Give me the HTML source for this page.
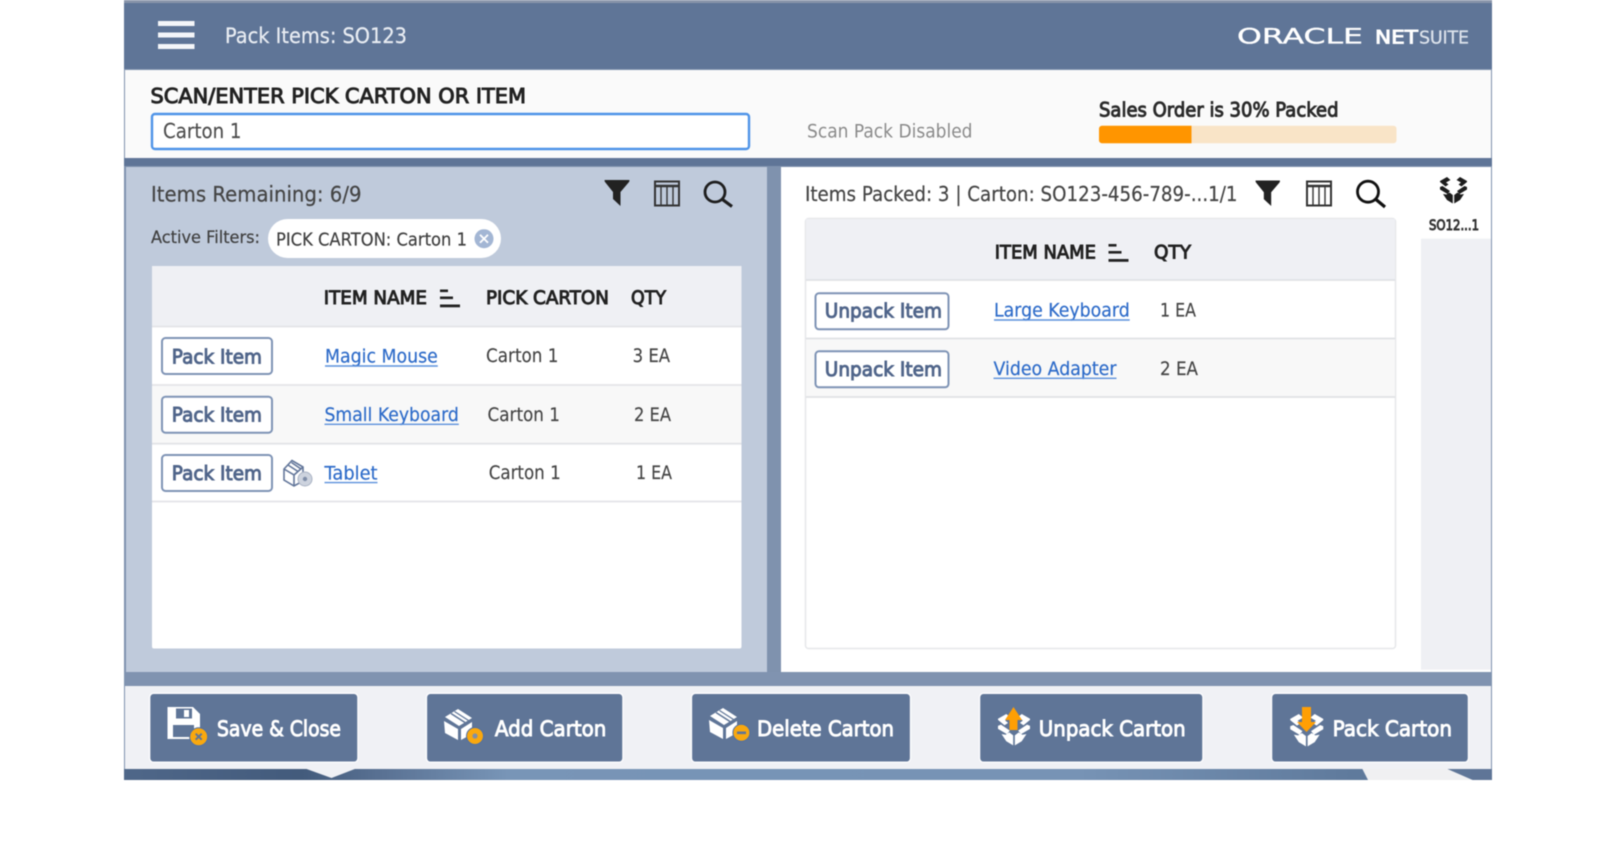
<!DOCTYPE html>
<html><head><meta charset="utf-8"><title>Pack Items: SO123</title>
<style>
html,body{margin:0;padding:0;background:#fff;width:1620px;height:849px;overflow:hidden}
svg{display:block}
text{font-family:"DejaVu Sans","Liberation Sans",sans-serif;white-space:pre}
.b{stroke-width:.95px}
.d{fill:#444;stroke:#444;stroke-width:.15px;font-size:19px}
.l{fill:#2d6bc9;stroke:#2d6bc9;stroke-width:.2px;font-size:19px}
.h{fill:#222;stroke:#222;font-size:18.500px}
.p{fill:#50658a;stroke:#50658a;font-size:19.500px}
.w{fill:#fff;stroke:#fff;font-size:21.500px}
</style></head><body>
<svg width="1620" height="849" viewBox="0 0 1620 849" xmlns="http://www.w3.org/2000/svg">
<defs>
<linearGradient id="bot" x1="0" x2="1" y1="0" y2="0">
<stop offset="0" stop-color="#4f6789"/><stop offset=".13" stop-color="#435b7c"/><stop offset=".19" stop-color="#5a7294"/><stop offset=".28" stop-color="#7895b7"/><stop offset=".7" stop-color="#7793b5"/><stop offset=".9" stop-color="#5f7a9c"/><stop offset="1" stop-color="#5f7597"/>
</linearGradient>
<symbol id="funnel" viewBox="0 0 26 27" overflow="visible"><path d="M1 1H25Q26 1 25 3L16.500 13V27L9 20V13L1 3Q0 1 1 1Z" fill="#222"/></symbol>
<symbol id="cols" viewBox="0 0 26 26" overflow="visible"><g fill="none" stroke="#333"><rect x="1" y="1" width="24" height="24" stroke-width="2"/><path d="M1 5.500H25" stroke-width="2.500"/><path d="M7 6V24M13 6V24M19 6V24" stroke-width="1.400"/></g></symbol>
<symbol id="sort" viewBox="0 0 20 18" overflow="visible"><g fill="#222"><rect x="0" y="0" width="8" height="2.600"/><rect x="0" y="7" width="13" height="2.600"/><rect x="0" y="15" width="20" height="2.800"/></g></symbol>
<symbol id="bx" viewBox="0 0 27 27" overflow="visible">
<path d="M7 0 10.500 3 6 5.500 8.500 7.500 5.500 9.500 0 5V4ZM20 0 16.500 3 21 5.500 18.500 7.500 21.500 9.500 27 5V4ZM0 10 2.500 9 10 14 7.500 17 0 12.500ZM27 10 24.500 9 17 14 19.500 17 27 12.500ZM3 17 6.500 17.500 9.500 15.500 12.800 18V26.500L7 23ZM24 17 20.500 17.500 17.500 15.500 14.200 18V26.500L20 23Z"/>
</symbol>
<symbol id="carton" viewBox="0 0 30 32" overflow="visible">
<path d="M0 13 14 21V32L1 25Z M17 21 28 14V26L17 32Z" fill="#fff"/>
<path d="M1 9 14 1 28 10 15 18Z" fill="#fff"/>
<path d="M7 5.500 21 14.500" stroke="#5f7597" stroke-width="1.600"/>
<path d="M10.500 3.500 24.500 12.500" stroke="#5f7597" stroke-width="1.200"/>
</symbol>
</defs>

<g style="filter:blur(.55px)">
<rect width="1620" height="849" fill="#fff"/>
<!-- app bg -->
<rect x="124" y="0" width="1368" height="780" fill="#7f92ae"/>
<rect x="124" y="0" width="1368" height="3" fill="#8995aa"/>
<rect x="124" y="3" width="1368" height="66" fill="#5f7597"/>
<rect x="158" y="21" width="36.500" height="5" fill="#f4f6f9"/>
<rect x="158" y="32.500" width="36.500" height="5" fill="#f4f6f9"/>
<rect x="158" y="44" width="36.500" height="5" fill="#f4f6f9"/>
<text x="225" y="43" font-size="21" fill="#e9edf3" stroke="#e9edf3" stroke-width=".25" textLength="182" lengthAdjust="spacingAndGlyphs">Pack Items: SO123</text>
<text x="1237" y="43.300" font-size="21" fill="#fff" stroke="#fff" stroke-width=".35" textLength="126" lengthAdjust="spacingAndGlyphs">ORACLE</text>
<text x="1375" y="43.300" font-size="19" fill="#fff" stroke="#fff" stroke-width=".9" textLength="43" lengthAdjust="spacingAndGlyphs">NET</text>
<text x="1419" y="43.300" font-size="17.500" fill="#dde3ec" stroke="#dde3ec" stroke-width=".25" textLength="50" lengthAdjust="spacing">SUITE</text>

<!-- scan bar -->
<rect x="125" y="70" width="1366" height="88" fill="#fafafa"/>
<rect x="124" y="158" width="1368" height="8" fill="#5f7597"/>
<text x="150.500" y="103" class="b" font-size="20.500" fill="#222" stroke="#222" textLength="375.500" lengthAdjust="spacingAndGlyphs">SCAN/ENTER PICK CARTON OR ITEM</text>
<rect x="152" y="114" width="597" height="35" rx="3" fill="#fff" stroke="#4f94e8" stroke-width="2.400"/>
<text x="163" y="138" font-size="20.500" fill="#4d4d4d" stroke="#4d4d4d" stroke-width=".15" textLength="78.500" lengthAdjust="spacingAndGlyphs">Carton 1</text>
<text x="807" y="137.300" font-size="18.500" fill="#8a8a8a" textLength="165.500" lengthAdjust="spacingAndGlyphs">Scan Pack Disabled</text>
<text x="1099" y="116.700" class="b" font-size="19.500" fill="#2b2b2b" stroke="#2b2b2b" textLength="239.500" lengthAdjust="spacingAndGlyphs">Sales Order is 30% Packed</text>
<rect x="1099" y="125.700" width="297.500" height="17.600" rx="3" fill="#f9e4c7"/>
<path d="M1102 125.700H1191.500V143.300H1102a3 3 0 0 1-3-3V128.700a3 3 0 0 1 3-3Z" fill="#ff9500"/>

<!-- left panel -->
<rect x="126" y="167" width="641" height="505" fill="#bfcadb"/>
<text x="151" y="201.700" font-size="21" fill="#444" stroke="#444" stroke-width=".2" textLength="210.500" lengthAdjust="spacingAndGlyphs">Items Remaining: 6/9</text>
<use href="#funnel" x="604" y="179" width="26" height="27"/>
<use href="#cols" x="654" y="180.500" width="26" height="26"/>
<circle cx="715" cy="192" r="10" fill="none" stroke="#1e1e1e" stroke-width="2.800"/><path d="M722.500 199.500 732 206.500" stroke="#1e1e1e" stroke-width="3.200"/>
<text x="151" y="243" font-size="17" fill="#3f3f3f" stroke="#3f3f3f" stroke-width=".2" textLength="109" lengthAdjust="spacingAndGlyphs">Active Filters:</text>
<rect x="268" y="219" width="233" height="39" rx="19.500" fill="#fff"/>
<text x="276" y="245.700" font-size="18" fill="#3f3f3f" stroke="#3f3f3f" stroke-width=".2" textLength="191" lengthAdjust="spacingAndGlyphs">PICK CARTON: Carton 1</text>
<circle cx="484" cy="238.700" r="9.500" fill="#a3b6d4"/><path d="M480 234.700 488 242.700M488 234.700 480 242.700" stroke="#fff" stroke-width="1.800"/>

<!-- left table -->
<rect x="152" y="266" width="589.500" height="382.500" rx="2" fill="#fff"/>
<rect x="152" y="266" width="589.500" height="60.500" fill="#eff0f4"/>
<rect x="152" y="385" width="589.500" height="58.700" fill="#f8f8f8"/>
<path d="M152 326.500H741.500M152 385H741.500M152 443.700H741.500M152 501.500H741.500" stroke="#e3e4e8" stroke-width="1.800"/>
<text x="323.700" y="304" class="b h" textLength="103.300" lengthAdjust="spacingAndGlyphs">ITEM NAME</text>
<use href="#sort" x="440" y="289.500" width="20" height="18"/>
<text x="486" y="304" class="b h" textLength="123" lengthAdjust="spacingAndGlyphs">PICK CARTON</text>
<text x="631" y="304" class="b h" textLength="35" lengthAdjust="spacingAndGlyphs">QTY</text>

<g fill="#fff" stroke="#7e93b5" stroke-width="2"><rect x="162" y="338" width="110" height="36" rx="3.500"/><rect x="162" y="396.700" width="110" height="36" rx="3.500"/><rect x="162" y="455" width="110" height="36" rx="3.500"/></g>
<text x="171.800" y="363.300" class="b p" textLength="90.200" lengthAdjust="spacingAndGlyphs">Pack Item</text>
<text x="171.800" y="421.700" class="b p" textLength="90.200" lengthAdjust="spacingAndGlyphs">Pack Item</text>
<text x="171.800" y="480" class="b p" textLength="90.200" lengthAdjust="spacingAndGlyphs">Pack Item</text>

<text x="325" y="362.700" class="l" textLength="112.800" lengthAdjust="spacingAndGlyphs">Magic Mouse</text>
<text x="324.500" y="421" class="l" textLength="134.300" lengthAdjust="spacingAndGlyphs">Small Keyboard</text>
<text x="324.500" y="479.300" class="l" textLength="53" lengthAdjust="spacingAndGlyphs">Tablet</text>
<g stroke="#5b90dc" stroke-width="1.400"><path d="M325 366H437.800M324.500 424.300H458.800M324.500 482.600H377.500"/></g>

<text x="486" y="362" class="d" textLength="72.500" lengthAdjust="spacingAndGlyphs">Carton 1</text>
<text x="487.500" y="421" class="d" textLength="72.500" lengthAdjust="spacingAndGlyphs">Carton 1</text>
<text x="488.700" y="479" class="d" textLength="72" lengthAdjust="spacingAndGlyphs">Carton 1</text>
<text x="632.600" y="362" class="d" textLength="37.500" lengthAdjust="spacingAndGlyphs">3 EA</text>
<text x="634" y="421" class="d" textLength="37" lengthAdjust="spacingAndGlyphs">2 EA</text>
<text x="636" y="479" class="d" textLength="36" lengthAdjust="spacingAndGlyphs">1 EA</text>

<!-- tablet icon -->
<g fill="none" stroke="#62769a" stroke-width="1.600"><path d="M284 469 292 460.500 303 467V481L294 486 284 480ZM284 469 294 475V486M294 475 303 467M288 465 298 471.500M291.500 462.500 301 469"/></g>
<circle cx="305" cy="479" r="7" fill="#cdd3de" stroke="#aab3c4" stroke-width="1"/><circle cx="305" cy="479" r="2.200" fill="#7f8ea8"/>

<!-- right panel -->
<rect x="781" y="167" width="710" height="505" fill="#fff"/>
<text x="805" y="201" font-size="20.500" fill="#444" stroke="#444" stroke-width=".2" textLength="432.500" lengthAdjust="spacingAndGlyphs">Items Packed: 3 | Carton: SO123-456-789-...1/1</text>
<use href="#funnel" x="1255" y="179.500" width="25.500" height="26.500"/>
<use href="#cols" x="1306" y="180.500" width="26" height="26"/>
<circle cx="1368" cy="191.700" r="10.500" fill="none" stroke="#111" stroke-width="2.800"/><path d="M1376 199.500 1385 207" stroke="#111" stroke-width="3.200"/>
<use href="#bx" x="1440" y="177" width="27" height="27" fill="#1c1c1c"/>
<text x="1429" y="230" class="b" font-size="14" fill="#333" stroke="#333" textLength="50" lengthAdjust="spacingAndGlyphs">SO12...1</text>
<rect x="1421" y="238.700" width="70" height="431" fill="#eff0f4"/>

<!-- right table -->
<rect x="805.500" y="218.500" width="590" height="430" rx="3" fill="#fff" stroke="#e6e7ea" stroke-width="1.500"/>
<rect x="806" y="219" width="589" height="61" fill="#eff0f4"/>
<rect x="806" y="338.500" width="589" height="58.500" fill="#f8f8f8"/>
<path d="M806 280H1395M806 338.500H1395M806 397H1395" stroke="#e0e1e5" stroke-width="1.800"/>
<text x="994.700" y="258.700" class="b h" textLength="101.300" lengthAdjust="spacingAndGlyphs">ITEM NAME</text>
<use href="#sort" x="1108" y="244" width="21" height="18"/>
<text x="1154" y="258.700" class="b h" textLength="37" lengthAdjust="spacingAndGlyphs">QTY</text>
<g fill="#fff" stroke="#7e93b5" stroke-width="2"><rect x="815.500" y="293.300" width="133" height="36" rx="3.500"/><rect x="815.500" y="351.300" width="133" height="36" rx="3.500"/></g>
<text x="824.800" y="317.700" class="b p" textLength="117.200" lengthAdjust="spacingAndGlyphs">Unpack Item</text>
<text x="824.800" y="376" class="b p" textLength="117.200" lengthAdjust="spacingAndGlyphs">Unpack Item</text>
<text x="994" y="316.700" class="l" textLength="135.700" lengthAdjust="spacingAndGlyphs">Large Keyboard</text>
<text x="993.500" y="375" class="l" textLength="123" lengthAdjust="spacingAndGlyphs">Video Adapter</text>
<g stroke="#5b90dc" stroke-width="1.400"><path d="M994 320H1129.700M993.500 378.300H1116.500"/></g>
<text x="1160" y="316.700" class="d" textLength="36" lengthAdjust="spacingAndGlyphs">1 EA</text>
<text x="1160" y="375" class="d" textLength="38" lengthAdjust="spacingAndGlyphs">2 EA</text>

<!-- footer -->
<rect x="124" y="672" width="1368" height="14" fill="#8093b0"/>
<rect x="125" y="686" width="1366" height="83" fill="#f0f1f5"/>
<rect x="124" y="769" width="1368" height="11" fill="url(#bot)"/>
<path d="M306.600 769H354.800L331.500 778Z" fill="#f0f1f5"/>
<path d="M1362.400 769H1447.400L1472.600 780H1368Z" fill="#f0f0f2"/>

<g fill="#5f7597" stroke="#fbfbfd" stroke-width="1.500">
<rect x="149.600" y="693.300" width="208.400" height="69" rx="4"/>
<rect x="426.400" y="693.300" width="196.600" height="69" rx="4"/>
<rect x="691.400" y="693.300" width="219.200" height="69" rx="4"/>
<rect x="979.500" y="693.300" width="223.500" height="69" rx="4"/>
<rect x="1271.500" y="693.300" width="197" height="69" rx="4"/>
</g>
<text x="217" y="736" class="b w" textLength="124" lengthAdjust="spacingAndGlyphs">Save &amp; Close</text>
<text x="494.900" y="736" class="b w" textLength="111.500" lengthAdjust="spacingAndGlyphs">Add Carton</text>
<text x="757" y="736" class="b w" textLength="137" lengthAdjust="spacingAndGlyphs">Delete Carton</text>
<text x="1038.800" y="736" class="b w" textLength="146.900" lengthAdjust="spacingAndGlyphs">Unpack Carton</text>
<text x="1332.600" y="736" class="b w" textLength="119.400" lengthAdjust="spacingAndGlyphs">Pack Carton</text>

<!-- save icon -->
<path d="M167.500 707H193L200 714V739H167.500Z" fill="#fff"/>
<rect x="176" y="708.500" width="16" height="10" fill="#5f7597"/><rect x="184" y="710" width="5" height="7" fill="#fff"/>
<rect x="173" y="725" width="21" height="12" fill="#5f7597"/>
<circle cx="198.700" cy="736.700" r="9" fill="#f9a80f" stroke="#4e6fa6"/><path d="M195.700 733.700 201.700 739.700M201.700 733.700 195.700 739.700" stroke="#5f7597" stroke-width="2"/>
<!-- add carton -->
<use href="#carton" x="444" y="708" width="30" height="32"/>
<circle cx="475" cy="736" r="8.500" fill="#f9a80f" stroke="#4e6fa6"/><circle cx="475" cy="736" r="2.600" fill="#7f8ea8"/>
<!-- delete carton -->
<use href="#carton" x="709" y="707" width="30" height="32"/>
<circle cx="741.400" cy="732.700" r="8.500" fill="#f9a80f" stroke="#4e6fa6"/><rect x="737" y="731.500" width="9" height="2.600" fill="#5f7597"/>
<!-- unpack -->
<use href="#bx" x="998" y="714" width="32" height="32" fill="#fff"/>
<path d="M1013.500 707 1022 720H1017.500V730H1009.500V720H1005Z" fill="#ff9f05"/>
<!-- pack -->
<use href="#bx" x="1290" y="714" width="33.500" height="33" fill="#fff"/>
<path d="M1302 707H1311V722H1316L1306.500 732 1297 722H1302Z" fill="#ff9f05"/>
</g>
</svg>
</body></html>
